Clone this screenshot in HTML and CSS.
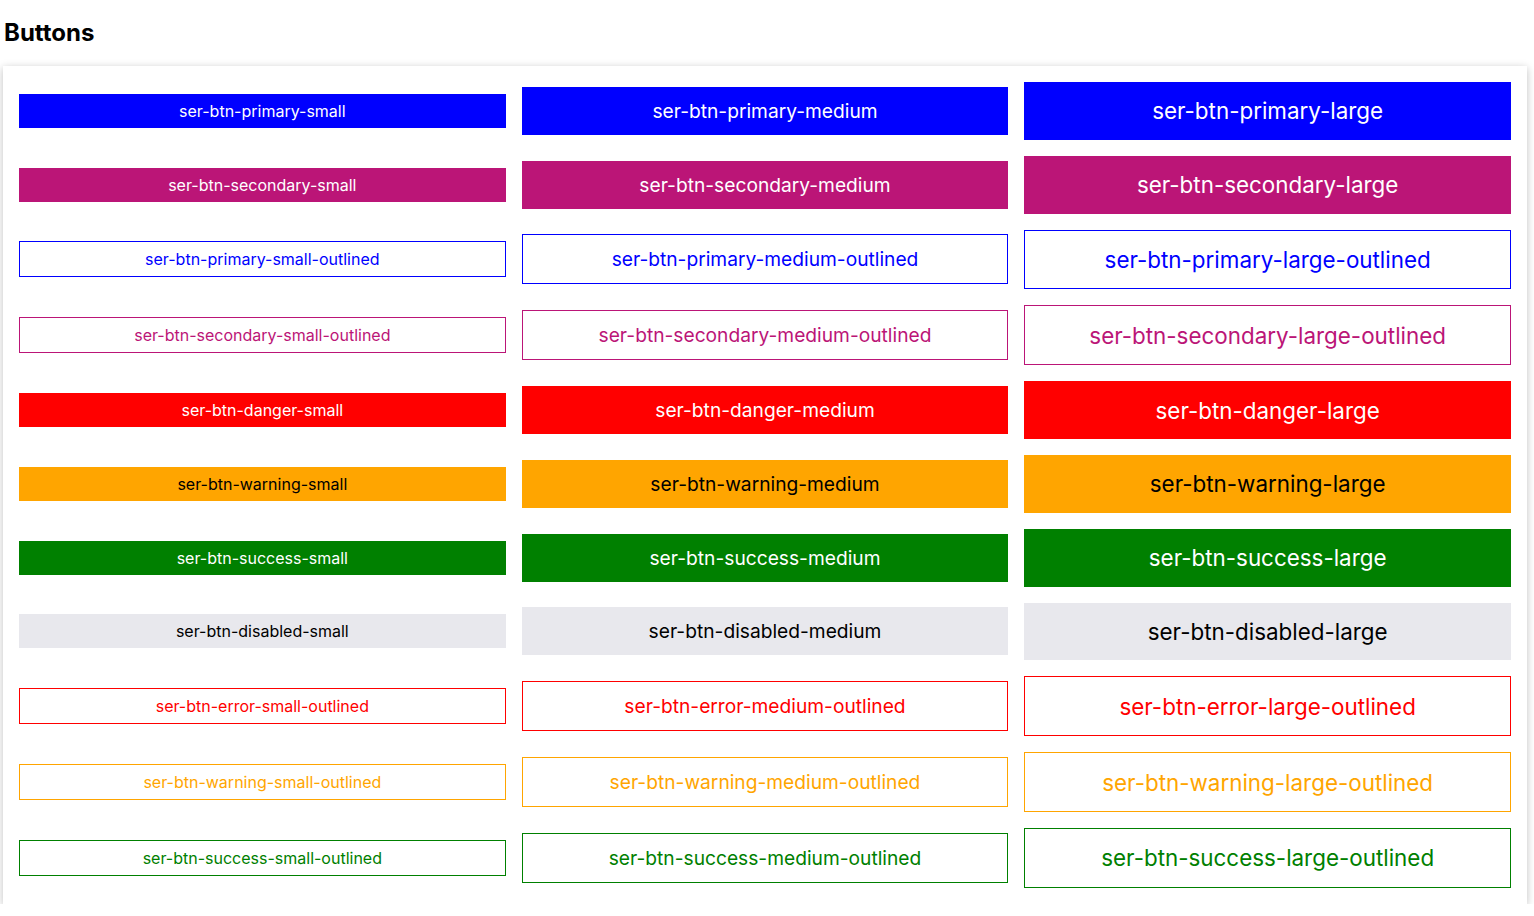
FILE: index.html
```html
<!DOCTYPE html>
<html>
<head>
<meta charset="utf-8">
<link rel="stylesheet" href="styles.css">
</head>
<body>
<h1 class="title">Buttons</h1>
<div class="card">
  <div class="grid">
    <button class="btn small primary">ser-btn-primary-small</button>
    <button class="btn medium primary">ser-btn-primary-medium</button>
    <button class="btn large primary">ser-btn-primary-large</button>

    <button class="btn small secondary">ser-btn-secondary-small</button>
    <button class="btn medium secondary">ser-btn-secondary-medium</button>
    <button class="btn large secondary">ser-btn-secondary-large</button>

    <button class="btn small o-primary">ser-btn-primary-small-outlined</button>
    <button class="btn medium o-primary">ser-btn-primary-medium-outlined</button>
    <button class="btn large o-primary">ser-btn-primary-large-outlined</button>

    <button class="btn small o-secondary">ser-btn-secondary-small-outlined</button>
    <button class="btn medium o-secondary">ser-btn-secondary-medium-outlined</button>
    <button class="btn large o-secondary">ser-btn-secondary-large-outlined</button>

    <button class="btn small danger">ser-btn-danger-small</button>
    <button class="btn medium danger">ser-btn-danger-medium</button>
    <button class="btn large danger">ser-btn-danger-large</button>

    <button class="btn small warning">ser-btn-warning-small</button>
    <button class="btn medium warning">ser-btn-warning-medium</button>
    <button class="btn large warning">ser-btn-warning-large</button>

    <button class="btn small success">ser-btn-success-small</button>
    <button class="btn medium success">ser-btn-success-medium</button>
    <button class="btn large success">ser-btn-success-large</button>

    <button class="btn small disabled">ser-btn-disabled-small</button>
    <button class="btn medium disabled">ser-btn-disabled-medium</button>
    <button class="btn large disabled">ser-btn-disabled-large</button>

    <button class="btn small o-error">ser-btn-error-small-outlined</button>
    <button class="btn medium o-error">ser-btn-error-medium-outlined</button>
    <button class="btn large o-error">ser-btn-error-large-outlined</button>

    <button class="btn small o-warning">ser-btn-warning-small-outlined</button>
    <button class="btn medium o-warning">ser-btn-warning-medium-outlined</button>
    <button class="btn large o-warning">ser-btn-warning-large-outlined</button>

    <button class="btn small o-success">ser-btn-success-small-outlined</button>
    <button class="btn medium o-success">ser-btn-success-medium-outlined</button>
    <button class="btn large o-success">ser-btn-success-large-outlined</button>
  </div>
</div>
</body>
</html>
```
FILE: styles.css
```css
html, body {
  margin: 0;
  padding: 0;
  background: #fff;
}
body {
  font-family: Inter, "Noto Sans", sans-serif;
  padding: 0 7px 0 3px;
}
.title {
  font-size: 24px;
  font-weight: 700;
  margin: 0;
  padding: 18px 0 0 1px;
  height: 66px;
  box-sizing: border-box;
  line-height: 29px;
  color: #000;
}
.card {
  background: #fff;
  box-shadow: 0 2px 8px rgba(0, 0, 0, 0.25);
  padding: 16px;
}
.grid {
  display: grid;
  grid-template-columns: repeat(3, 1fr);
  gap: 16px;
  align-items: center;
}
.btn {
  font-family: Inter, "Noto Sans", sans-serif;
  border: none;
  margin: 0;
  padding: 0;
  width: 100%;
  color: #fff;
  background: transparent;
  display: block;
  text-align: center;
  box-sizing: border-box;
  font-weight: 400;
}
.small { height: 34px; font-size: 16px; }
.medium { height: 48px; font-size: 19.2px; }
.large { height: 57.8px; font-size: 22.4px; }
.small[class*="o-"] { height: 36px; }
.medium[class*="o-"] { height: 50px; }
.large[class*="o-"] { height: 59.8px; }

.primary { background: #0000ff; }
.secondary { background: #bb1577; }
.danger { background: #ff0000; }
.warning { background: #ffa500; color: #000; }
.success { background: #008000; }
.disabled { background: #e8e8ed; color: #000; }

.o-primary { border: 1px solid #0000ff; color: #0000ff; }
.o-secondary { border: 1px solid #bb1577; color: #bb1577; }
.o-error { border: 1px solid #ff0000; color: #ff0000; }
.o-warning { border: 1px solid #ffa500; color: #ffa500; }
.o-success { border: 1px solid #008000; color: #008000; }
```
